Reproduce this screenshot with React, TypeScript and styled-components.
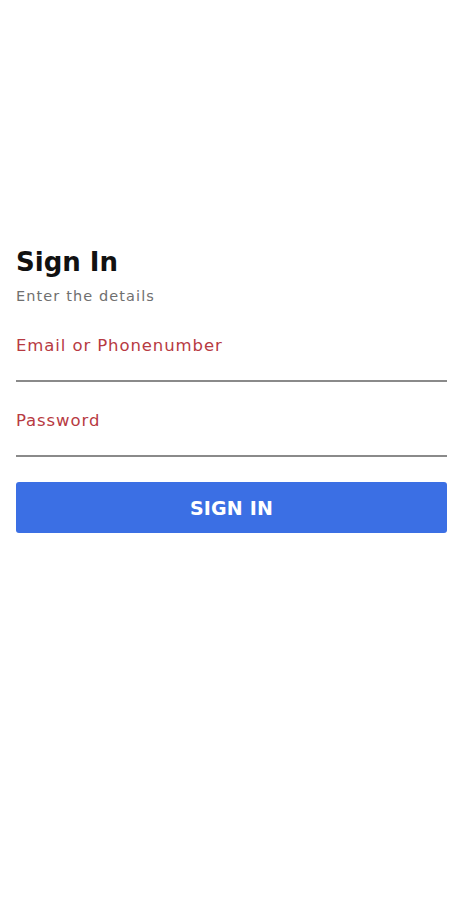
import styled, { createGlobalStyle } from 'styled-components';

const GlobalStyle = createGlobalStyle`
  html, body {
    margin: 0;
    padding: 0;
    background: #fff;
  }
  body {
    font-family: "DejaVu Sans", "Liberation Sans", sans-serif;
  }
`;

function App() {
  return (
    <>
      <GlobalStyle />
      <Page>
        <Form>
          <Title>Sign In</Title>
          <Subtitle>Enter the details</Subtitle>
          <Field>
            <Label>Email or Phonenumber</Label>
          </Field>
          <Field>
            <Label>Password</Label>
          </Field>
          <Button type="button">SIGN IN</Button>
        </Form>
      </Page>
    </>
  );
}

const Page = styled.div`
  width: 462px;
  height: 900px;
  background: #fff;
  padding: 245px 15px 0 16px;
  box-sizing: border-box;
`;

const Form = styled.div`
  display: flex;
  flex-direction: column;
`;

const Title = styled.h1`
  margin: 0;
  font-size: 26px;
  font-weight: 700;
  color: #111;
  line-height: 34px;
`;

const Subtitle = styled.p`
  margin: 8px 0 2px;
  font-size: 14.5px;
  letter-spacing: 1.1px;
  color: #6f6f6f;
  line-height: 18px;
`;

const Field = styled.div`
  height: 75px;
  border-bottom: 2px solid #8a8a8a;
  box-sizing: border-box;
  padding-top: 29px;
`;

const Label = styled.div`
  font-size: 16.5px;
  letter-spacing: 0.9px;
  color: #b73a42;
  line-height: 20px;
`;

const Button = styled.button`
  margin-top: 25px;
  height: 51px;
  border: none;
  border-radius: 3px;
  background: #3b6fe4;
  color: #fff;
  font-family: "DejaVu Sans", sans-serif;
  font-size: 19px;
  font-weight: 700;
  letter-spacing: 0.2px;
`;

export default App;
